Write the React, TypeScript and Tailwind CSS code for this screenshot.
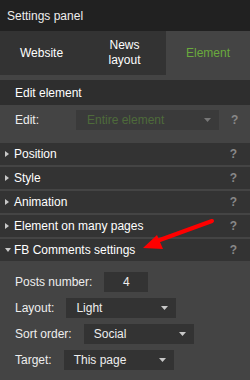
import React from "react";

const Caret = ({ color = "#c8c8c8" }: { color?: string }) => (
  <svg width="7" height="4" viewBox="0 0 7 4" className="shrink-0">
    <path d="M0 0 L7 0 L3.5 4 Z" fill={color} />
  </svg>
);

const Row = ({ title, open }: { title: string; open?: boolean }) => (
  <div className="h-[22px] bg-[#333] flex items-center pl-[5px] pr-[13px] text-white">
    <span className="w-[9px] flex items-center">
      {open ? (
        <svg width="6" height="4" viewBox="0 0 6 4">
          <path d="M0 0 L6 0 L3 4 Z" fill="#c8c8c8" />
        </svg>
      ) : (
        <svg width="4" height="6" viewBox="0 0 4 6">
          <path d="M0 0 L4 3 L0 6 Z" fill="#c8c8c8" />
        </svg>
      )}
    </span>
    <span className="flex-1">{title}</span>
    <span className="text-[#888] font-bold text-[12px]">?</span>
  </div>
);

const Select = ({ value, w }: { value: string; w: string }) => (
  <div className={`h-[20px] bg-[#333] flex items-center pl-[10px] pr-[8px] text-[#eee] ${w}`}>
    <span className="flex-1">{value}</span>
    <Caret />
  </div>
);

export default function App() {
  return (
    <div
      className="w-[250px] h-[380px] bg-[#444] overflow-hidden relative text-[12px]"
      style={{ fontFamily: '"Liberation Sans", Arial, sans-serif' }}
    >
      <div className="h-[31px] bg-[#212121] text-[#eee] flex items-center px-[7px]">
        Settings panel
      </div>
      <div className="h-[44px] grid grid-cols-[83px_83px_84px] text-white text-center leading-[15px]">
        <div className="bg-[#333] flex items-center justify-center">Website</div>
        <div className="bg-[#333] flex items-center justify-center">
          News
          <br />
          layout
        </div>
        <div className="bg-[#444] flex items-center justify-center text-[#6aaa3d]">Element</div>
      </div>
      <div className="h-[5px] bg-[#444]" />
      <div className="h-[25px] bg-[#2e2e2e] text-white flex items-center px-[15px]">
        Edit element
      </div>
      <div className="h-[38px] bg-[#444] flex items-start pt-[5px] pl-[15px]">
        <span className="w-[61px] text-[#eee] leading-[20px]">Edit:</span>
        <div className="w-[143px] h-[20px] bg-[#3a3a3a] flex items-center pl-[11px] pr-[8px] text-[#4e6a3a]">
          <span className="flex-1">Entire element</span>
          <Caret color="#777" />
        </div>
        <span className="ml-[12px] text-[#888] font-bold text-[12px] leading-[20px]">?</span>
      </div>
      <div className="flex flex-col gap-[2px] bg-[#444]">
        <Row title="Position" />
        <Row title="Style" />
        <Row title="Animation" />
        <Row title="Element on many pages" />
        <Row title="FB Comments settings" open />
      </div>
      <div className="flex flex-col gap-[6px] pt-[11px] px-[15px] text-[#eee]">
        <div className="flex items-center gap-3 h-[20px]">
          <span>Posts number:</span>
          <div className="w-[44px] h-[20px] bg-[#333] flex items-center justify-center">4</div>
        </div>
        <div className="flex items-center gap-3 h-[20px]">
          <span>Layout:</span>
          <Select value="Light" w="w-[110px]" />
        </div>
        <div className="flex items-center gap-3 h-[20px]">
          <span>Sort order:</span>
          <Select value="Social" w="w-[110px]" />
        </div>
        <div className="flex items-center gap-3 h-[20px]">
          <span>Target:</span>
          <Select value="This page" w="w-[110px]" />
        </div>
      </div>
      <svg
        className="absolute left-0 top-0 pointer-events-none"
        width="250"
        height="380"
        viewBox="0 0 250 380"
      >
        <line x1="212" y1="221" x2="157" y2="241" stroke="#f00" strokeWidth="4" strokeLinecap="round" />
        <path d="M143 248 L157 235 L163 249 Z" fill="#f00" />
      </svg>
    </div>
  );
}
